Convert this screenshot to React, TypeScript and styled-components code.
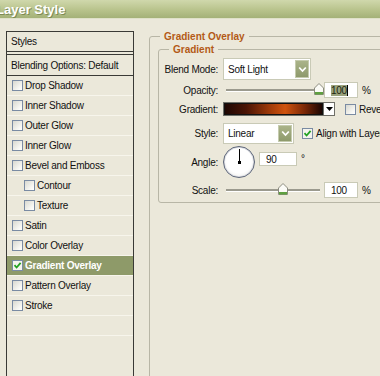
import styled, { createGlobalStyle } from 'styled-components'

const GlobalStyle = createGlobalStyle`
  html, body {
    margin: 0;
    padding: 0;
    background: #ebe8da;
  }
  body {
    font-family: 'Liberation Sans', Arial, sans-serif;
    font-size: 10px;
    letter-spacing: -0.25px;
    color: #111;
  }
`

const listItems: Array<{ label: string; indent?: boolean; checked?: boolean }> = [
  { label: 'Drop Shadow' },
  { label: 'Inner Shadow' },
  { label: 'Outer Glow' },
  { label: 'Inner Glow' },
  { label: 'Bevel and Emboss' },
  { label: 'Contour', indent: true },
  { label: 'Texture', indent: true },
  { label: 'Satin' },
  { label: 'Color Overlay' },
  { label: 'Gradient Overlay', checked: true },
  { label: 'Pattern Overlay' },
  { label: 'Stroke' }
]

function CheckMark() {
  return (
    <svg width="9" height="9" viewBox="0 0 9 9">
      <path d="M1.5 4.2 L3.6 6.5 L7.6 1.8" fill="none" stroke="#21a121" strokeWidth="1.8" />
    </svg>
  )
}

function Chevron() {
  return (
    <svg width="9" height="7" viewBox="0 0 9 7">
      <path d="M1.2 1.5 L4.5 5 L7.8 1.5" fill="none" stroke="#fff" strokeWidth="1.8" />
    </svg>
  )
}

function Slider({ pos }: { pos: number }) {
  return (
    <SliderTrack>
      <SliderThumb style={{ left: pos }}>
        <svg width="10" height="12" viewBox="0 0 10 12">
          <path d="M0.5 11.5 V5 L5 0.5 L9.5 5 V11.5 Z" fill="#fbfbf6" stroke="#8c8c80" />
          <rect x="1" y="9" width="8" height="2.5" fill="#5fa040" />
        </svg>
      </SliderThumb>
    </SliderTrack>
  )
}

export default function App() {
  return (
    <Window>
      <GlobalStyle />
      <TitleBar>
        <TitleText>Layer Style</TitleText>
      </TitleBar>
      <Body>
        <StylesList>
          <HeaderRow>Styles</HeaderRow>
          <BlendRow>Blending Options: Default</BlendRow>
          {listItems.map((item) => (
            <ItemRow key={item.label} $active={!!item.checked} $indent={!!item.indent}>
              <CheckBox $on={!!item.checked}>{item.checked && <CheckMark />}</CheckBox>
              <span>{item.label}</span>
            </ItemRow>
          ))}
          <ItemRow $active={false} $indent={false} />
        </StylesList>

        <OuterGroup>
          <GroupLegend $offset={2}>Gradient Overlay</GroupLegend>
          <InnerGroup>
            <GroupLegend $offset={10}>Gradient</GroupLegend>

            <Row $h={22} $mt={2}>
              <Label>Blend Mode:</Label>
              <Select $w={88}>
                <span>Soft Light</span>
                <SelectButton>
                  <Chevron />
                </SelectButton>
              </Select>
            </Row>

            <Row $h={16} $mt={2}>
              <Label>Opacity:</Label>
              <Slider pos={88} />
              <NumberField $w={34} $h={16}>
                <Selected>100</Selected>
                <Caret />
              </NumberField>
              <Unit>%</Unit>
            </Row>

            <Row $h={14} $mt={4}>
              <Label>Gradient:</Label>
              <GradientPicker>
                <GradientSwatch />
                <GradientArrow>
                  <svg width="7" height="4" viewBox="0 0 7 4">
                    <path d="M0 0 H7 L3.5 4 Z" fill="#000" />
                  </svg>
                </GradientArrow>
              </GradientPicker>
              <CheckBox $on={false} style={{ marginLeft: 10 }} />
              <SideText>Reverse</SideText>
            </Row>

            <Row $h={21} $mt={7}>
              <Label>Style:</Label>
              <Select $w={71}>
                <span>Linear</span>
                <SelectButton>
                  <Chevron />
                </SelectButton>
              </Select>
              <CheckBox $on style={{ marginLeft: 8 }}>
                <CheckMark />
              </CheckBox>
              <SideText>Align with Layer</SideText>
            </Row>

            <Row $h={32} $mt={2}>
              <Label>Angle:</Label>
              <Dial>
                <DialHand />
                <DialDot />
              </Dial>
              <NumberField $w={38} $h={14} style={{ marginLeft: 4, marginTop: -6 }}>
                90
              </NumberField>
              <Degree>°</Degree>
            </Row>

            <Row $h={16} $mt={4}>
              <Label>Scale:</Label>
              <Slider pos={52} />
              <NumberField $w={34} $h={16}>
                100
              </NumberField>
              <Unit>%</Unit>
            </Row>
          </InnerGroup>
        </OuterGroup>
      </Body>
    </Window>
  )
}

// Styled Components

const Window = styled.div`
  width: 380px;
  height: 376px;
  overflow: hidden;
  background: #ebe8da;
  display: flex;
  flex-direction: column;
`

const TitleBar = styled.div`
  height: 18px;
  flex-shrink: 0;
  background: linear-gradient(to bottom, #d0d8ac 0%, #b8c38c 55%, #a4b178 100%);
  border-bottom: 1px solid #dfe1c9;
  display: flex;
  align-items: center;
`

const TitleText = styled.div`
  margin-left: -4px;
  font-size: 13px;
  font-weight: bold;
  letter-spacing: 0;
  color: #fff;
  text-shadow: 1px 1px 0 #7d8a55;
`

const Body = styled.div`
  flex: 1;
  display: flex;
  align-items: flex-start;
  padding-left: 6px;
`

const StylesList = styled.div`
  margin-top: 12px;
  width: 126px;
  height: 400px;
  flex-shrink: 0;
  border: 1px solid #3a3a36;
  display: flex;
  flex-direction: column;
`

const HeaderRow = styled.div`
  height: 19px;
  padding-left: 4px;
  display: flex;
  align-items: center;
  border-bottom: 4px double #3a3a36;
`

const BlendRow = styled.div`
  height: 20px;
  padding-left: 4px;
  display: flex;
  align-items: center;
  border-bottom: 1px solid #3a3a36;
`

const ItemRow = styled.div<{ $active: boolean; $indent: boolean }>`
  height: 19px;
  flex-shrink: 0;
  display: flex;
  align-items: center;
  gap: 2px;
  padding-left: ${(p) => (p.$indent ? 17 : 5)}px;
  border-bottom: 1px solid #f7f5ec;
  background: ${(p) => (p.$active ? '#8e9a69' : 'transparent')};
  color: ${(p) => (p.$active ? '#fff' : '#111')};
  font-weight: ${(p) => (p.$active ? 'bold' : 'normal')};
`

const CheckBox = styled.div<{ $on: boolean }>`
  width: 11px;
  height: 11px;
  flex-shrink: 0;
  box-sizing: border-box;
  border: 1px solid #7a8ba3;
  background: ${(p) => (p.$on ? '#f4f4ee' : 'linear-gradient(135deg, #d8d8d0 0%, #f6f6f2 70%, #ffffff 100%)')};
  display: flex;
  align-items: center;
  justify-content: center;
`

const OuterGroup = styled.fieldset`
  margin: 11px 0 0 15px;
  padding: 0 0 0 8px;
  width: 400px;
  height: 400px;
  flex-shrink: 0;
  border: 1px solid #b8b6a6;
  border-radius: 3px;
`

const GroupLegend = styled.legend<{ $offset: number }>`
  margin-left: ${(p) => p.$offset}px;
  padding: 0 4px;
  font-weight: bold;
  font-size: 10px;
  line-height: 13px;
  letter-spacing: 0;
  color: #b35a16;
`

const InnerGroup = styled.fieldset`
  margin: 0;
  padding: 0 0 4px 0;
  width: 380px;
  border: 1px solid #b8b6a6;
  border-radius: 3px;
`

const Row = styled.div<{ $h: number; $mt: number }>`
  height: ${(p) => p.$h}px;
  margin-top: ${(p) => p.$mt}px;
  display: flex;
  align-items: center;
`

const Label = styled.div`
  width: 59px;
  margin-right: 5px;
  text-align: right;
  flex-shrink: 0;
`

const Select = styled.div<{ $w: number }>`
  width: ${(p) => p.$w}px;
  height: 100%;
  box-sizing: border-box;
  border: 1px solid #c9cab6;
  background: #fff;
  display: flex;
  align-items: center;
  justify-content: space-between;
  padding: 1px 1px 1px 4px;
`

const SelectButton = styled.div`
  width: 14px;
  height: 100%;
  background: linear-gradient(to bottom, #aab389, #8e9a6c);
  border: 1px solid #c5cbae;
  box-sizing: border-box;
  display: flex;
  align-items: center;
  justify-content: center;
`

const SliderTrack = styled.div`
  position: relative;
  width: 94px;
  height: 2px;
  margin-left: 3px;
  margin-right: 4px;
  background: #9b9a8e;
  border-bottom: 1px solid #fff;
`

const SliderThumb = styled.div`
  position: absolute;
  top: -6px;
  line-height: 0;
`

const NumberField = styled.div<{ $w: number; $h: number }>`
  width: ${(p) => p.$w}px;
  height: ${(p) => p.$h}px;
  box-sizing: border-box;
  border: 1px solid #c9cab6;
  background: #fff;
  display: flex;
  align-items: center;
  padding-left: 6px;
`

const Selected = styled.span`
  background: #9aa27c;
  color: #1c2410;
  line-height: 11px;
`

const Caret = styled.span`
  width: 1px;
  height: 11px;
  background: #000;
`

const Unit = styled.span`
  margin-left: 4px;
`

const GradientPicker = styled.div`
  width: 112px;
  height: 100%;
  box-sizing: border-box;
  border: 1px solid #6f6f68;
  display: flex;
`

const GradientSwatch = styled.div`
  flex: 1;
  border: 1px solid #111;
  background: linear-gradient(
    to right,
    #1e0703 0%,
    #4a1405 22%,
    #a53d0a 48%,
    #cf530e 62%,
    #7b2807 82%,
    #1b0603 100%
  );
`

const GradientArrow = styled.div`
  width: 10px;
  background: #fff;
  border-left: 1px solid #6f6f68;
  display: flex;
  align-items: center;
  justify-content: center;
`

const SideText = styled.span`
  margin-left: 3px;
  white-space: nowrap;
`

const Dial = styled.div`
  position: relative;
  width: 32px;
  height: 32px;
  box-sizing: border-box;
  border-radius: 50%;
  border: 1px solid #5c6578;
  background: radial-gradient(circle at 50% 45%, #ffffff 55%, #e4e4de 100%);
  box-shadow: inset 0 0 0 1px #d9dbe2;
`

const DialHand = styled.div`
  position: absolute;
  left: 15px;
  top: 2px;
  width: 1px;
  height: 14px;
  background: #000;
`

const DialDot = styled.div`
  position: absolute;
  left: 14px;
  top: 14px;
  width: 3px;
  height: 3px;
  background: #000;
`

const Degree = styled.span`
  align-self: flex-start;
  margin-left: 4px;
  margin-top: 7px;
`
